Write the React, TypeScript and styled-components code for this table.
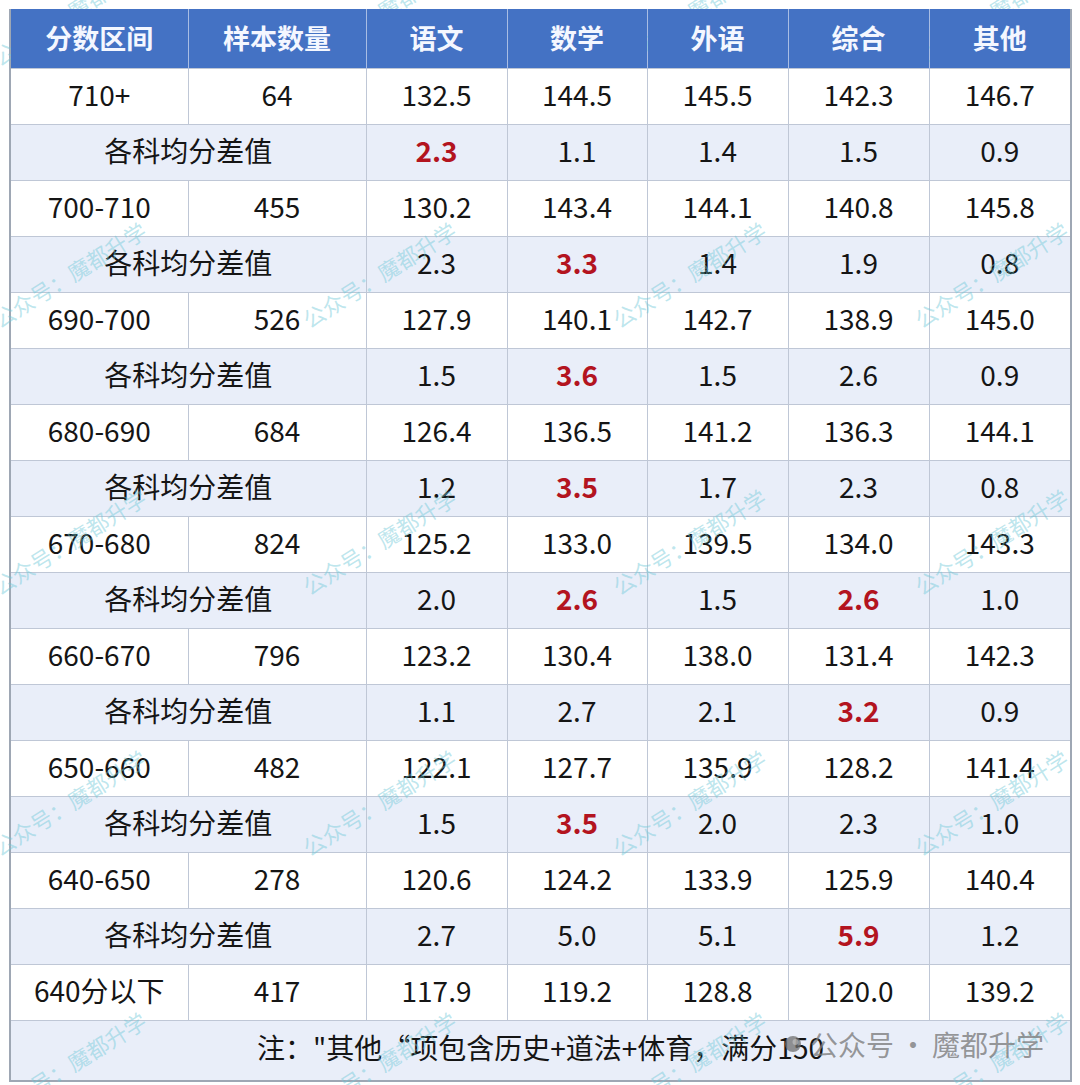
import React from 'react';
import styled, { createGlobalStyle } from 'styled-components';

const GlobalStyle = createGlobalStyle`
  html, body {
    margin: 0;
    padding: 0;
    background: #ffffff;
  }
  body {
    font-family: "Noto Sans CJK SC", "Noto Sans", sans-serif;
  }
`;

const Page = styled.div`
  position: relative;
  width: 1080px;
  height: 1085px;
  padding: 9px 10px 0 9px;
  box-sizing: border-box;
  overflow: hidden;
  background: #fff;
`;

const Table = styled.table`
  width: 1061px;
  border-collapse: collapse;
  table-layout: fixed;
  border: 2px solid #9ea7b4;
  border-top: none;
  font-size: 28px;
  color: #151515;
`;

const HeadCell = styled.th`
  position: relative;
  z-index: 2;
  height: 56px;
  padding: 0 0 3px;
  background: #4472c4;
  color: #f4f7ff;
  font-weight: 700;
  font-size: 27px;
  text-align: center;
  border-left: 1px solid #a9bde4;
  &:first-child {
    border-left: none;
  }
`;

const Row = styled.tr<{ $alt?: boolean }>`
  height: 56px;
  background: ${p => (p.$alt ? '#e9eef9' : '#ffffff')};
`;

const Cell = styled.td<{ $hot?: boolean }>`
  padding: 0 0 6px;
  text-align: center;
  vertical-align: middle;
  border: 1px solid #bfc7d6;
  color: ${p => (p.$hot ? '#b3141f' : '#151515')};
  font-weight: ${p => (p.$hot ? 700 : 400)};
  white-space: nowrap;
`;

const NoteRow = styled.tr`
  height: 60px;
  background: #e9eef9;
`;

const Watermarks = styled.div`
  position: absolute;
  inset: 0;
  z-index: 1;
  pointer-events: none;
`;

const Mark = styled.div`
  position: absolute;
  font-size: 22px;
  line-height: 22px;
  white-space: nowrap;
  color: rgba(110, 200, 215, 0.45);
  transform-origin: left bottom;
  transform: rotate(-32deg);
`;

const Stamp = styled.div`
  position: absolute;
  left: 784px;
  top: 1024px;
  z-index: 3;
  display: flex;
  align-items: center;
  gap: 8px;
  font-size: 28px;
  color: rgba(125, 125, 125, 0.8);
  pointer-events: none;
`;

const Dot = styled.span`
  margin: 0 5px;
`;

const widths = [178, 178, 141, 140, 141, 141, 142];
const heads = ['分数区间', '样本数量', '语文', '数学', '外语', '综合', '其他'];

const rows = [
  { range: '710+', n: '64', v: ['132.5', '144.5', '145.5', '142.3', '146.7'], d: ['2.3', '1.1', '1.4', '1.5', '0.9'], hot: [0] },
  { range: '700-710', n: '455', v: ['130.2', '143.4', '144.1', '140.8', '145.8'], d: ['2.3', '3.3', '1.4', '1.9', '0.8'], hot: [1] },
  { range: '690-700', n: '526', v: ['127.9', '140.1', '142.7', '138.9', '145.0'], d: ['1.5', '3.6', '1.5', '2.6', '0.9'], hot: [1] },
  { range: '680-690', n: '684', v: ['126.4', '136.5', '141.2', '136.3', '144.1'], d: ['1.2', '3.5', '1.7', '2.3', '0.8'], hot: [1] },
  { range: '670-680', n: '824', v: ['125.2', '133.0', '139.5', '134.0', '143.3'], d: ['2.0', '2.6', '1.5', '2.6', '1.0'], hot: [1, 3] },
  { range: '660-670', n: '796', v: ['123.2', '130.4', '138.0', '131.4', '142.3'], d: ['1.1', '2.7', '2.1', '3.2', '0.9'], hot: [3] },
  { range: '650-660', n: '482', v: ['122.1', '127.7', '135.9', '128.2', '141.4'], d: ['1.5', '3.5', '2.0', '2.3', '1.0'], hot: [1] },
  { range: '640-650', n: '278', v: ['120.6', '124.2', '133.9', '125.9', '140.4'], d: ['2.7', '5.0', '5.1', '5.9', '1.2'], hot: [3] },
];

const markCols = [0, 310, 620, 922];
const markRows = [68, 330, 597, 858, 1120];

const App: React.FC = () => {
  return (
    <Page>
      <GlobalStyle />
      <Table>
        <colgroup>
          {widths.map((w, i) => (
            <col key={i} style={{ width: w }} />
          ))}
        </colgroup>
        <thead>
          <tr>
            {heads.map(h => (
              <HeadCell key={h}>{h}</HeadCell>
            ))}
          </tr>
        </thead>
        <tbody>
          {rows.map(r => (
            <React.Fragment key={r.range}>
              <Row>
                <Cell>{r.range}</Cell>
                <Cell>{r.n}</Cell>
                {r.v.map((x, i) => (
                  <Cell key={i}>{x}</Cell>
                ))}
              </Row>
              <Row $alt>
                <Cell colSpan={2}>各科均分差值</Cell>
                {r.d.map((x, i) => (
                  <Cell key={i} $hot={r.hot.includes(i)}>
                    {x}
                  </Cell>
                ))}
              </Row>
            </React.Fragment>
          ))}
          <Row>
            <Cell>640分以下</Cell>
            <Cell>417</Cell>
            {['117.9', '119.2', '128.8', '120.0', '139.2'].map((x, i) => (
              <Cell key={i}>{x}</Cell>
            ))}
          </Row>
          <NoteRow>
            <Cell colSpan={7}>注："其他“项包含历史+道法+体育，满分150</Cell>
          </NoteRow>
        </tbody>
      </Table>

      <Watermarks>
        {markRows.map(y =>
          markCols.map(x => (
            <Mark key={`${x}-${y}`} style={{ left: x, top: y - 22 }}>
              公众号：魔都升学
            </Mark>
          ))
        )}
      </Watermarks>

      <Stamp>
        <svg width="18" height="18" viewBox="0 0 18 18">
          <circle cx="9" cy="9" r="8" fill="rgba(110,110,110,0.75)" />
          <circle cx="11.5" cy="7" r="3" fill="rgba(200,200,200,0.6)" />
        </svg>
        <span>
          公众号<Dot>·</Dot>魔都升学
        </span>
      </Stamp>
    </Page>
  );
};

export default App;
